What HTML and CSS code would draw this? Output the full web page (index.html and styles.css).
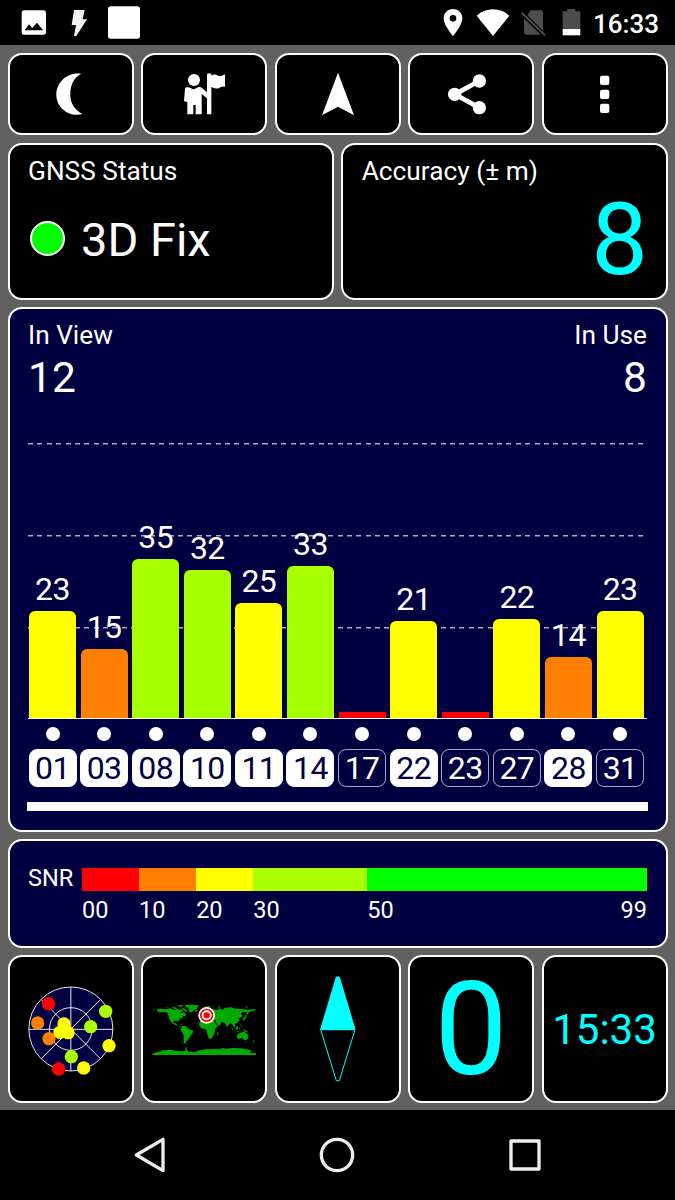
FILE: index.html
```html
<!DOCTYPE html>
<html lang="en">
<head>
  <meta charset="UTF-8">
  <meta name="viewport" content="width=device-width, initial-scale=1.0">
  <title>GNSS Status</title>
  <link rel="stylesheet" href="styles.css">
</head>
<body>

  <header class="statusbar">
    <svg class="st-image" viewBox="63 0 78 135"><path fill="#fff" fill-rule="evenodd" d="M72 31H130Q138 31 138 39V96Q138 104 130 104H72Q65 104 65 96V39Q65 31 72 31ZM74 91H129L111 68L97 84L87 73Z"/></svg>
    <svg class="st-flash" viewBox="210 0 54 135"><path fill="#f2f2f2" d="M222 30H254L248 58H261L229 108H222L228 75H215Z"/></svg>
    <svg class="st-box" viewBox="321 0 102 135"><rect x="324" y="19" width="96" height="97" rx="8" fill="#fff"/></svg>
    <svg class="st-pin" viewBox="321 0 66 135"><path fill="#fff" fill-rule="evenodd" d="M354 27C338 27 326 39 326 55C326 76 354 108 354 108S382 76 382 55C382 39 370 27 354 27ZM354 45A10 10 0 1 1 354 65A10 10 0 1 1 354 45Z"/></svg>
    <svg class="st-wifi" viewBox="423 0 102 135"><path fill="#fff" d="M425 47Q447 28 474 28T523 47L474 108Z"/></svg>
    <svg class="st-sim" viewBox="555 0 78 135"><path fill="#4d4d4d" d="M587 31H617Q624 31 624 38V92L577 46ZM567 55L617 104H574Q567 104 567 97Z"/><path d="M560 38L630 106" stroke="#4d4d4d" stroke-width="6"/></svg>
    <svg class="st-battery" viewBox="681 0 57 135"><path fill="#4d4d4d" d="M697 27H721V34H736V88H683V34H697Z"/><path fill="#fff" d="M683 87H736V106H683Z"/></svg>
    <span class="clock">16:33</span>
  </header>

  <main>
    <div class="row toolbar">
      <button class="card" aria-label="Night mode">
        <svg class="icon" viewBox="140 209 144 144"><path d="M243 220C199 214 168 247 168 283C168 323 207 352 247 341C223 330 209 308 210 281C210 252 222 230 243 220Z"/></svg>
      </button>
      <button class="card" aria-label="Guide">
        <svg class="icon" viewBox="540 209 144 144">
          <circle cx="582" cy="239" r="18"/>
          <path d="M560 261Q570 260 577 266Q583 269 589 263Q600 257 607 264L621 276V221Q628 216 634 221V226Q645 219 654 226Q664 229 675 222V259Q665 256 656 264Q647 266 634 260V342H621V294L605 281V342H587V314H580V342H562V305L552 303L555 265Q556 261 560 261Z"/>
        </svg>
      </button>
      <button class="card" aria-label="Navigate">
        <svg class="icon" viewBox="941 209 144 144"><path d="M1013 217L1061 345L1013 319L965 345Z"/></svg>
      </button>
      <button class="card" aria-label="Share">
        <svg class="icon" viewBox="336 209 144 144">
          <circle cx="433" cy="242" r="20"/><circle cx="359" cy="282" r="20"/><circle cx="433" cy="322" r="20"/>
          <path d="M433 242L359 282L433 322" fill="none" stroke="#fff" stroke-width="14"/>
        </svg>
      </button>
      <button class="card" aria-label="Menu">
        <svg class="icon" viewBox="738 209 144 144"><rect x="795" y="226" width="28" height="28" rx="6"/><rect x="795" y="268" width="28" height="28" rx="6"/><rect x="795" y="310" width="28" height="28" rx="6"/></svg>
      </button>
    </div>

    <div class="row summary">
      <section class="card panel">
        <h2>GNSS Status</h2>
        <div class="fix"><span class="led"></span>3D Fix</div>
      </section>
      <section class="card panel">
        <h2>Accuracy (± m)</h2>
        <div class="accuracy">8</div>
      </section>
    </div>

    <section class="card panel navy satellites">
      <div class="counts">
        <div><h2>In View</h2><div class="count">12</div></div>
        <div class="right"><h2>In Use</h2><div class="count">8</div></div>
      </div>
      <div class="chart">
        <div class="col"><span>23</span><div class="bar yellow" style="height: 107.5px"></div></div>
        <div class="col"><span>15</span><div class="bar orange" style="height: 69px"></div></div>
        <div class="col"><span>35</span><div class="bar lime" style="height: 159px"></div></div>
        <div class="col"><span>32</span><div class="bar lime" style="height: 148px"></div></div>
        <div class="col"><span>25</span><div class="bar yellow" style="height: 115px"></div></div>
        <div class="col"><span>33</span><div class="bar lime" style="height: 152.5px"></div></div>
        <div class="col"><div class="bar red" style="height: 6.5px"></div></div>
        <div class="col"><span>21</span><div class="bar yellow" style="height: 97px"></div></div>
        <div class="col"><div class="bar red" style="height: 6.5px"></div></div>
        <div class="col"><span>22</span><div class="bar yellow" style="height: 99px"></div></div>
        <div class="col"><span>14</span><div class="bar orange" style="height: 61.5px"></div></div>
        <div class="col"><span>23</span><div class="bar yellow" style="height: 107.5px"></div></div>
      </div>
      <div class="ids">
        <div class="id used">01</div>
        <div class="id used">03</div>
        <div class="id used">08</div>
        <div class="id used">10</div>
        <div class="id used">11</div>
        <div class="id used">14</div>
        <div class="id">17</div>
        <div class="id used">22</div>
        <div class="id">23</div>
        <div class="id">27</div>
        <div class="id used">28</div>
        <div class="id">31</div>
      </div>
      <div class="scroll"></div>
    </section>

    <section class="card panel navy snr">
      <div class="snr-label">SNR</div>
      <div class="scale">
        <div><div class="seg red"></div>00</div>
        <div><div class="seg orange"></div>10</div>
        <div><div class="seg yellow"></div>20</div>
        <div><div class="seg lime"></div>30</div>
        <div><div class="seg green"></div><div class="ends"><span>50</span><span>99</span></div></div>
      </div>
    </section>

    <div class="row tiles">
      <div class="card">
        <svg class="radar" viewBox="68 92 288 288">
          <circle cx="211.5" cy="236" r="126" fill="#000040"/>
          <g fill="none" stroke="#e4e4ee" stroke-width="3">
            <circle cx="211.5" cy="236" r="126"/>
            <circle cx="211.5" cy="236" r="64"/>
            <path d="M211.500 110V362M85.500 237H337.500M123 325L300 148M123 148L300 325"/>
          </g>
          <g fill="#a8ff00"><circle cx="316" cy="183" r="20"/><circle cx="271" cy="229" r="20"/><circle cx="213" cy="319" r="20"/></g>
          <g fill="#ff8000"><circle cx="112" cy="218" r="20"/><circle cx="146" cy="265" r="20"/></g>
          <g fill="#f00"><circle cx="145" cy="160" r="20"/><circle cx="175" cy="356" r="20"/></g>
          <g fill="#ff0"><circle cx="191" cy="221" r="20"/><circle cx="179" cy="246" r="20"/><circle cx="203" cy="247" r="20"/><circle cx="326" cy="286" r="20"/><circle cx="250" cy="353" r="20"/></g>
        </svg>
      </div>
      <div class="card">
        <svg class="world" viewBox="36 42 312 156">
          <g fill="#00aa00">
            <path d="M51 59L58 56L80 58L88 55L103 59L113 56L117 60L126 57L130 64L123 66L120 70L128 69L132 65L139 74L134 79L128 77L130 81L121 86L116 91L117 96L109 92L100 93L102 100L108 100L110 104L116 109L123 108L120 111L111 107L100 102L94 97L88 87L86 79L83 70L76 66L64 66L55 71L59 65L51 64Z"/>
            <path d="M112 46L130 45L126 50L119 50ZM132 47L145 44L176 46L170 57L161 61L153 68L147 64L146 54L136 50ZM122 52L134 56L143 63L138 65L130 59ZM163 61L172 60L173 63L168 66ZM112 99L123 102L129 104L124 104Z"/>
            <path d="M125 109L134 107L145 114L150 119L160 122L157 132L152 136L150 142L145 147L140 153L133 163L130 160L132 148L130 133L124 124L122 118Z"/>
            <path d="M181 68L190 63L200 58L215 57L231 60L242 55L247 60L255 53L276 52L284 56L304 57L326 59L348 57L343 62L329 65L321 75L317 71L322 66L309 66L303 70L307 78L300 84L295 83L298 90L292 99L284 102L286 107L282 112L276 102L271 99L265 105L263 113L255 99L247 97L239 95L245 100L236 107L229 100L226 91L215 88L213 83L205 84L198 80L190 83L181 85L179 78Z"/>
            <path d="M183 87L200 85L211 90L223 91L226 102L234 107L225 117L224 128L220 137L213 147L206 145L202 133L200 122L196 117L184 115L178 108L178 97Z"/>
            <path d="M232 128L236 125L234 136L230 136ZM294 131L304 128L310 124L318 129L323 133L325 143L319 151L312 149L307 144L294 147L290 140ZM270 109L282 121L278 121ZM283 123L299 125L294 127ZM287 112L294 109L293 119L286 118ZM296 114L301 112L300 119ZM308 117L325 124L317 126ZM302 101L306 109L302 109ZM307 88L315 80L317 73L320 77L316 87L309 92ZM340 153L345 149L342 156L336 160ZM315 155L320 154L318 158ZM38 57L44 58L40 61ZM216 49L219 46L217 53ZM235 48L242 50L236 55ZM315 49L326 52L318 53ZM193 50L213 48L207 54ZM78 51L84 53L79 54ZM93 51L105 52L112 56L104 57ZM134 81L141 81L138 84Z"/>
            <path d="M37 191L50 186L61 185L67 181L82 181L92 179L110 183L128 184L139 181L135 176L142 169L140 178L145 185L163 187L177 181L200 178L222 177L236 178L249 174L260 177L276 174L304 175L320 178L334 181L331 189L348 190V195H37Z"/>
          </g>
          <circle cx="200" cy="76" r="25" fill="#fff"/>
          <circle cx="200" cy="76" r="17.500" fill="none" stroke="#f00" stroke-width="5"/>
          <circle cx="200" cy="76" r="9.500" fill="#f00"/>
        </svg>
      </div>
      <div class="card">
        <svg class="compass" viewBox="131 74 144 324">
          <path fill="#0ff" stroke="#0ff" stroke-width="3" d="M198 80H207L254 237H151Z"/>
          <path fill="none" stroke="#0ff" stroke-width="3" d="M151 238H254L207 391H198Z"/>
        </svg>
      </div>
      <div class="card speed">0</div>
      <div class="card time">15:33</div>
    </div>
  </main>

  <nav class="navbar">
    <svg viewBox="97 111 108 108"><path d="M110 165L190 118V212Z"/></svg>
    <svg viewBox="658 111 108 108"><circle cx="712" cy="165" r="47"/></svg>
    <svg viewBox="1221 111 108 108"><rect x="1233" y="123" width="84" height="84"/></svg>
  </nav>

</body>
</html>
```
FILE: styles.css
```css
* {
  box-sizing: border-box;
}

body {
  margin: 0;
  width: 675px;
  height: 1200px;
  display: flex;
  flex-direction: column;
  background-color: #000;
  color: #fff;
  font-family: Roboto, sans-serif;
  overflow: hidden;
}

svg {
  display: block;
  flex: none;
}

h2 {
  margin: 0;
  font-size: 26.25px;
  font-weight: 400;
  line-height: 30px;
}

.statusbar {
  height: 45px;
  padding: 0 15px 0 21px;
  display: flex;
  align-items: center;
}

.statusbar svg {
  height: 45px;
}

.st-image {
  width: 26px;
}

.st-flash {
  width: 18px;
  margin-left: 23px;
}

.st-box {
  width: 34px;
  margin-left: 19px;
}

.st-pin {
  width: 22px;
  margin-left: auto;
}

.st-wifi {
  width: 34px;
  margin-left: 12px;
}

.st-sim {
  width: 26px;
  margin-left: 10px;
}

.st-battery {
  width: 19px;
  margin-left: 16px;
}

.clock {
  width: 67px;
  margin-left: 12px;
  font-size: 26px;
  font-weight: 500;
  line-height: 30px;
  padding-top: 2px;
}

main {
  height: 1065px;
  padding: 7.5px;
  display: grid;
  grid-template-rows: 82.5px 157px 524.5px 108.5px 147.5px;
  gap: 7.5px;
  background-color: #616161;
}

.row {
  display: grid;
  gap: 7.5px;
}

.toolbar,
.tiles {
  grid-template-columns: repeat(5, 126px);
}

.summary {
  grid-template-columns: 1fr 1fr;
}

.card {
  display: flex;
  align-items: center;
  justify-content: center;
  padding: 0;
  background-color: #000;
  border: 2px solid #fff;
  border-radius: 14px;
  color: inherit;
  font-family: inherit;
}

.icon {
  width: 48px;
  height: 48px;
  fill: #fff;
}

.panel {
  display: block;
  padding: 11px 18.5px 0;
}

.navy {
  background-color: #000040;
}

.fix {
  display: flex;
  align-items: center;
  gap: 16px;
  margin-top: 26px;
  padding-left: 2px;
  font-size: 47px;
  line-height: 56px;
}

.led {
  width: 35px;
  height: 35px;
  margin-top: -3px;
  border: 2px solid #fff;
  border-radius: 50%;
  background-color: #0f0;
}

.accuracy {
  margin: 4px -1px 0 0;
  color: #0ff;
  font-size: 101px;
  line-height: 100px;
  text-align: right;
}

.counts {
  display: flex;
  justify-content: space-between;
}

.right {
  text-align: right;
}

.count {
  font-size: 42.5px;
  line-height: 50px;
  margin-top: 3px;
}

/* dashed lines at 20, 40 and 60 dB */
.chart {
  display: grid;
  grid-template-columns: repeat(12, 47px);
  column-gap: 4.6px;
  height: 276px;
  margin-top: 40px;
  padding-left: 1px;
  border-bottom: 1px solid #fff;
  background-image:
    repeating-linear-gradient(to right, #a9a9c0 0 5px, transparent 5px 9.38px),
    repeating-linear-gradient(to right, #a9a9c0 0 5px, transparent 5px 9.38px),
    repeating-linear-gradient(to right, #a9a9c0 0 5px, transparent 5px 9.38px);
  background-size: 615px 1.5px;
  background-position: 0 0, 0 91.5px, 0 183.5px;
  background-repeat: no-repeat;
}

.col {
  display: flex;
  flex-direction: column;
  justify-content: flex-end;
  text-align: center;
  font-size: 32px;
  line-height: 32px;
  letter-spacing: -0.6px;
}

.col span {
  margin-bottom: 6px;
}

.bar {
  border-radius: 6px 6px 0 0;
}

.bar.red {
  border-radius: 0;
}

.red {
  background-color: #f00;
}

.orange {
  background-color: #ff8000;
}

.yellow {
  background-color: #ff0;
}

.lime {
  background-color: #a8ff00;
}

.green {
  background-color: #0f0;
}

.ids {
  display: grid;
  grid-template-columns: repeat(12, 48px);
  column-gap: 3.6px;
  margin-top: 8px;
  padding-left: 0.5px;
}

.id {
  height: 38px;
  margin-top: 22px;
  border: 1px solid #a9a9c0;
  border-radius: 8px;
  font-size: 32px;
  line-height: 36px;
  letter-spacing: -0.6px;
  text-align: center;
}

/* health dot above each satellite id */
.id::before {
  content: "";
  display: block;
  width: 14px;
  height: 14px;
  margin: -23px auto 9px;
  border-radius: 50%;
  background-color: #fff;
}

.id.used {
  border-color: #fff;
  background-color: #fff;
  color: #000040;
}

.scroll {
  height: 9px;
  margin: 15px -1px 0;
  background-color: #fff;
}

.snr {
  display: flex;
  align-items: flex-start;
  padding-top: 27px;
  font-size: 23.5px;
}

.snr-label {
  width: 54px;
  line-height: 20px;
}

.scale {
  flex: 1;
  display: grid;
  grid-template-columns: 10fr 10fr 10fr 20fr 49fr;
  line-height: 28px;
}

.seg {
  height: 23px;
  margin-bottom: 5px;
}

.ends {
  display: flex;
  justify-content: space-between;
}

.radar {
  width: 96px;
  height: 96px;
}

.world {
  width: 104px;
  height: 52px;
  margin-top: 2px;
}

.compass {
  width: 48px;
  height: 108px;
}

.speed {
  padding-top: 2px;
  color: #0ff;
  font-size: 130px;
  line-height: 140px;
}

.time {
  padding-top: 1px;
  color: #0ff;
  font-size: 42px;
}

.navbar {
  height: 90px;
  padding: 0 56px;
  display: grid;
  grid-template-columns: repeat(3, 1fr);
  align-items: center;
  justify-items: center;
}

.navbar svg {
  width: 36px;
  height: 36px;
  fill: none;
  stroke: #eee;
  stroke-width: 10;
  stroke-linejoin: round;
}
```
